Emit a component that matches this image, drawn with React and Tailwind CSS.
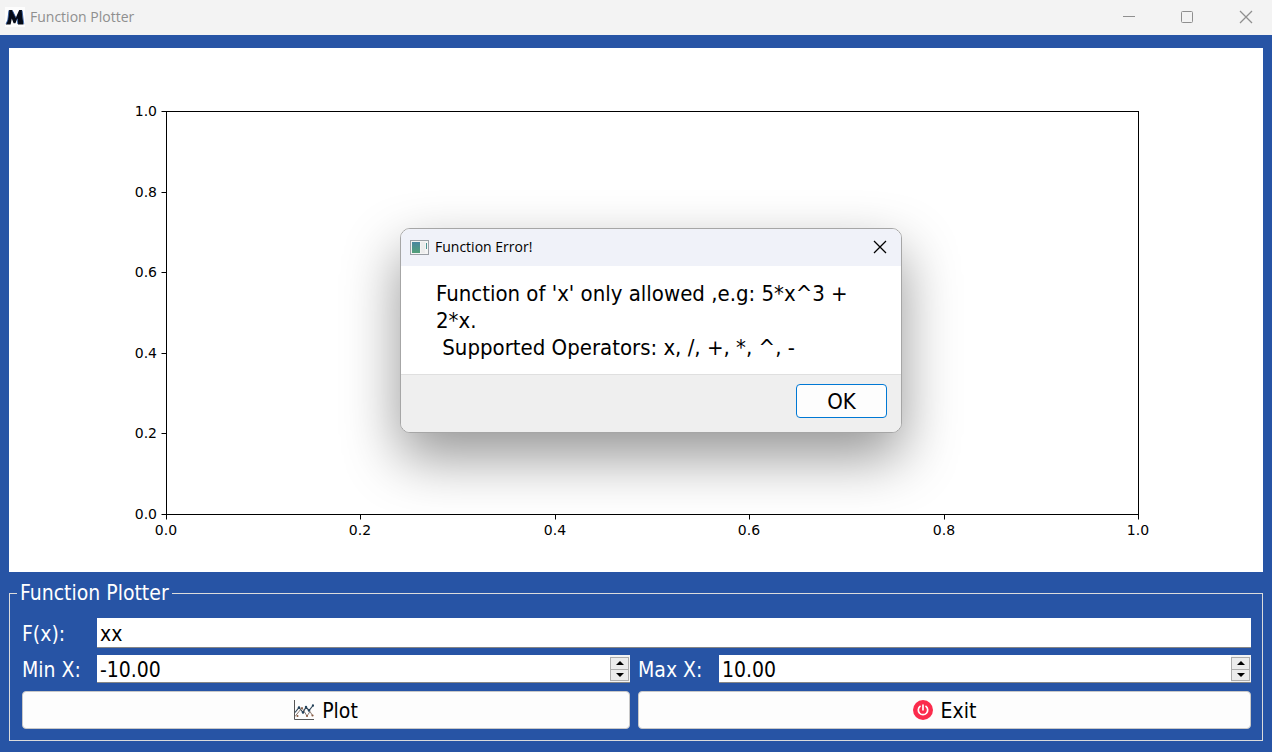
import { useState } from "react";

const TICKS = [0, 0.2, 0.4, 0.6, 0.8, 1];

function AppLogo() {
  return (
    <svg viewBox="0 0 20 20" className="size-5 shrink-0" aria-hidden="true">
      <rect width="20" height="20" fill="#fdfdfd" />
      <path d="M4 3 7.2 3 10.9 10.4 14.2 3 17 3 18.4 17.4 13 17.4 12.4 11.4 10.4 16.2 8.6 16.2 6.8 11.4 5.6 17.4 .8 17.4 2.8 13Z" fill="#050a16" />
      <path d="M4 3.4 2.8 13 1 17M7.4 3.6 10.9 10.8M17 3.6 18.8 17.2M12.2 11.8 12.8 17" fill="none" stroke="#2c5aa6" strokeWidth=".8" />
    </svg>
  );
}

function CloseGlyph() {
  return (
    <svg viewBox="0 0 14 14" className="size-3.5" fill="none" stroke="currentColor" strokeWidth="1.25" aria-hidden="true">
      <path d="M1 1 13 13M13 1 1 13" />
    </svg>
  );
}

function TitleBar() {
  return (
    <header className="flex h-[35px] shrink-0 items-center bg-[#f3f3f3] pb-0.5 pl-[5px] text-[#8f8f8f]">
      <AppLogo />
      <h1 className="ml-[5px] flex-1 font-['Open_Sans','Noto_Sans',sans-serif] text-sm">Function Plotter</h1>
      <button type="button" aria-label="Minimize" className="flex h-8 w-[58px] items-center justify-center">
        <svg viewBox="0 0 12 12" className="size-3" aria-hidden="true"><path d="M0 5.5H12" stroke="currentColor" /></svg>
      </button>
      <button type="button" aria-label="Maximize" className="flex h-8 w-[58px] items-center justify-center">
        <svg viewBox="0 0 12 12" className="size-3" aria-hidden="true"><rect x=".5" y=".5" width="11" height="11" rx="1" fill="none" stroke="currentColor" /></svg>
      </button>
      <button type="button" aria-label="Close" className="flex h-8 w-[56px] items-center justify-center pl-1">
        <CloseGlyph />
      </button>
    </header>
  );
}

function Chart() {
  const left = 157.5, right = 1129.5, top = 63.5, bottom = 466.5;
  return (
    <svg viewBox="0 0 1254 524" className="w-full bg-white font-['DejaVu_Sans',sans-serif]" role="img" aria-label="Empty plot">
      <rect x={left} y={top} width={right - left} height={bottom - top} fill="none" stroke="#000" />
      {TICKS.map((t) => {
        const x = Math.floor(left + t * (right - left)) + 0.5;
        const y = Math.floor(bottom - t * (bottom - top)) + 0.5;
        return (
          <g key={t}>
            <path d={`M${x} ${bottom}v5M${left} ${y}h-5`} stroke="#000" />
            <text x={x - 0.5} y={bottom + 20.5} textAnchor="middle" fontSize="14">{t.toFixed(1)}</text>
            <text x={left - 9.5} y={y + 4.5} textAnchor="end" fontSize="14">{t.toFixed(1)}</text>
          </g>
        );
      })}
    </svg>
  );
}

function SpinField({ id, label, labelClass, value, onChange }) {
  const step = (d) => onChange((Number(value) + d).toFixed(2));
  return (
    <div className="flex items-center">
      <label htmlFor={id} className={labelClass}>{label}</label>
      <div className="flex h-7 min-w-0 flex-1 border-b border-[#868686] bg-white">
        <input id={id} inputMode="decimal" value={value} onChange={(e) => onChange(e.target.value)} className="min-w-0 flex-1 bg-white pt-0.5 pl-[3px] text-black outline-none" />
        <div className="flex w-5 flex-col bg-[#f3f3f3] pt-0.5 pr-px pb-px">
          <button type="button" aria-label={`Increase ${label}`} onClick={() => step(1)} className="flex flex-1 items-center justify-center border border-[#adadad] bg-[#ececec]">
            <svg viewBox="0 0 8 4" className="h-1 w-2" aria-hidden="true"><path d="M4 0 8 4H0Z" /></svg>
          </button>
          <button type="button" aria-label={`Decrease ${label}`} onClick={() => step(-1)} className="flex flex-1 items-center justify-center border border-t-0 border-[#adadad] bg-[#ececec]">
            <svg viewBox="0 0 8 4" className="h-1 w-2" aria-hidden="true"><path d="M0 0H8L4 4Z" /></svg>
          </button>
        </div>
      </div>
    </div>
  );
}

function PlotIcon() {
  return (
    <svg viewBox="0 0 20 20" className="size-5" fill="none" aria-hidden="true">
      <path d="M.5 0V19.5H20" stroke="#555" />
      <path d="M1 12.5 5 7.5 9 12.5 12 7 15 10.5 19 5.5" stroke="#34495a" strokeWidth="1.2" />
      <path d="M1 16.5 5 11.5 8 8 13 16 16 11.5 18.5 15.5" stroke="#7d6a60" strokeWidth=".9" />
      <g fill="#24435c"><circle cx="5" cy="7.5" r="1.2" /><circle cx="9" cy="12.5" r="1.2" /><circle cx="12" cy="7" r="1.2" /><circle cx="15" cy="10.5" r="1.2" /><circle cx="19" cy="5.5" r="1.2" /></g>
      <g fill="#8a5a40"><circle cx="8" cy="8" r=".9" /><circle cx="13" cy="16" r="1.1" /><circle cx="18.5" cy="15.5" r="1.1" /><circle cx="3.5" cy="16" r="1" /></g>
    </svg>
  );
}

function PowerIcon() {
  return (
    <svg viewBox="0 0 20 20" className="size-5" fill="none" aria-hidden="true">
      <circle cx="10" cy="10" r="10" fill="#fb2b4c" />
      <path d="M7 6.4a4.7 4.7 0 1 0 6 0M10 5.2v4.6" stroke="#fff" strokeWidth="1.7" strokeLinecap="round" />
    </svg>
  );
}

function ErrorDialog({ onClose }) {
  return (
    <div role="dialog" aria-labelledby="error-title" className="absolute top-[228px] left-[400px] w-[502px] overflow-hidden rounded-[10px] border border-[#a6a6a6] bg-white text-[22px] text-black shadow-[0_24px_56px_rgba(0,0,0,0.42)]">
      <div className="flex h-[37px] items-center bg-[#f0f2f9] pr-[14px] pb-px pl-[9px]">
        <svg viewBox="0 0 19 15" className="h-[15px] w-[19px]" aria-hidden="true">
          <defs>
            <linearGradient id="pane" x1="0" y1="0" x2="0" y2="1"><stop stopColor="#4a86a0" /><stop offset="1" stopColor="#52a078" /></linearGradient>
          </defs>
          <rect x=".5" y=".5" width="18" height="14" fill="#f4f4f4" stroke="#9a9fa5" />
          <rect x="2" y="2" width="8" height="11" fill="url(#pane)" />
          <path d="M11 2h4v11h-4z" fill="#ececec" />
          <path d="M16.5 3v6" stroke="#4a9190" />
        </svg>
        <h2 id="error-title" className="ml-1.5 flex-1 font-['Open_Sans','Noto_Sans',sans-serif] text-sm">Function Error!</h2>
        <button type="button" aria-label="Close dialog" onClick={onClose}><CloseGlyph /></button>
      </div>
      <p className="px-[35px] pt-[14px] pb-[13px] leading-[27px] whitespace-pre">
        {"Function of 'x' only allowed ,e.g: 5*x^3 +\n2*x.\n Supported Operators: x, /, +, *, ^, -"}
      </p>
      <div className="flex justify-end border-t border-[#dfdfdf] bg-[#efefef] pt-[9px] pr-[14px] pb-[14px]">
        <button type="button" onClick={onClose} className="h-[34px] w-[91px] rounded-sm border border-[#0078d4] bg-[#fdfdfd] pt-0.5">OK</button>
      </div>
    </div>
  );
}

export default function App() {
  const [fx, setFx] = useState("xx");
  const [min, setMin] = useState("-10.00");
  const [max, setMax] = useState("10.00");
  const [error, setError] = useState(true);
  const button = "flex h-[38px] items-center justify-center gap-2 rounded border border-[#c8c8c8] bg-[#fdfdfd] text-black";

  return (
    <div className="relative flex min-h-screen flex-col bg-[#2754a5] font-['DejaVu_Sans_Condensed','Noto_Sans',sans-serif] text-[21px] leading-[26px] text-white">
      <TitleBar />
      <main className="flex flex-1 flex-col gap-2 px-[9px] pt-[13px] pb-[11px]">
        <Chart />
        <form onSubmit={(e) => { e.preventDefault(); setError(true); }}>
          <fieldset className="border border-[#dcdcdc] pt-3 pr-[11px] pb-[11px] pl-3">
            <legend className="-ml-[5px] px-[3px]">Function Plotter</legend>
            <div className="flex items-center">
              <label htmlFor="fx" className="w-[75px] pt-0.5">F(x):</label>
              <input id="fx" value={fx} onChange={(e) => setFx(e.target.value)} className="h-[30px] min-w-0 flex-1 border-b border-[#868686] bg-white pt-0.5 pl-[3px] text-black outline-none" />
            </div>
            <div className="mt-[7px] grid grid-cols-[608fr_613fr] gap-2">
              <SpinField id="min" label="Min X:" labelClass="w-[75px] pt-0.5" value={min} onChange={setMin} />
              <SpinField id="max" label="Max X:" labelClass="w-[81px] pt-0.5" value={max} onChange={setMax} />
              <button type="submit" className={button}><PlotIcon /><span className="pt-0.5">Plot</span></button>
              <button type="button" className={button}><PowerIcon /><span className="pt-0.5">Exit</span></button>
            </div>
          </fieldset>
        </form>
      </main>
      {error && <ErrorDialog onClose={() => setError(false)} />}
    </div>
  );
}
